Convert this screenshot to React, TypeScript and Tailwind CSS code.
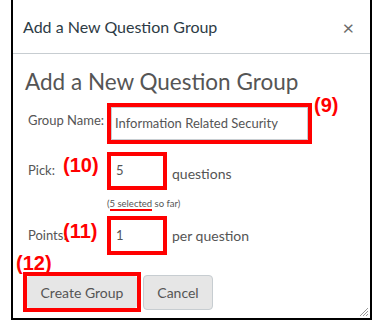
import React from "react";

const Tag = ({ text, className }: { text: string; className: string }) => (
  <span
    className={`absolute text-[20px] font-bold leading-none text-[#ff0000] ${className}`}
    style={{ fontFamily: '"Liberation Sans", Arial, sans-serif' }}
  >
    {text}
  </span>
);

const App = () => {
  return (
    <div className="w-[372px] h-[320px] bg-white" style={{ fontFamily: "Lato, sans-serif" }}>
      <div className="relative ml-[11px] w-[361px] h-[320px] border-l-2 border-r-2 border-b-2 border-black text-[#555]">
        {/* header */}
        <div className="h-[54px] flex items-center justify-between pl-[10px] pr-[16px] border-b border-[#c7cdd1]">
          <span className="text-[16px] text-[#2d3b45]">Add a New Question Group</span>
          <span className="text-[20px] leading-none text-[#6b6b6b]">×</span>
        </div>

        <div className="pl-[12px] pt-[14px]">
          <h2 className="text-[22.5px] leading-[28px] text-[#555]">Add a New Question Group</h2>

          {/* group name */}
          <div className="flex mt-[7px]">
            <span className="w-[82px] pl-[3px] pt-[8px] text-[13px]">Group Name:</span>
            <div className="w-[205px] h-[41px] border-4 border-[#ff0000]">
              <div className="h-full border border-[#c7cdd1] flex items-center pl-[3px] text-[13px]">
                Information Related Security
              </div>
            </div>
          </div>

          {/* pick */}
          <div className="flex items-center mt-[8px]">
            <span className="w-[82px] pl-[3px] self-start pt-[9px] text-[13px]">Pick:</span>
            <div className="w-[60px] h-[38px] border-4 border-[#ff0000] flex items-center pl-[5px] text-[13px]">
              5
            </div>
            <span className="ml-[5px] mt-[5px] text-[14px]">questions</span>
          </div>

          <div className="ml-[82px] mt-[8px] text-[9.5px] leading-[12px]">
            (<span className="border-b-2 border-[#ff0000]">5 selected</span> so far)
          </div>

          {/* points */}
          <div className="flex items-center mt-[6px]">
            <span className="w-[82px] pl-[3px] text-[13px]">Points:</span>
            <div className="w-[60px] h-[39px] border-4 border-[#ff0000] flex items-center pl-[5px] text-[13px]">
              1
            </div>
            <span className="ml-[5px] text-[14px]">per question</span>
          </div>

          {/* buttons */}
          <div className="flex items-center gap-[2px] mt-[17px] -ml-[2px]">
            <div className="border-4 border-[#ff0000] w-[118px] h-[40px]">
              <button className="w-full h-full bg-[#e6e6e6] text-[14px] text-[#555] rounded-[3px]">
                Create Group
              </button>
            </div>
            <button className="w-[70px] h-[35px] bg-[#e6e6e6] border border-[#c7cdd1] rounded-[4px] text-[14px] text-[#555]">
              Cancel
            </button>
          </div>
        </div>

        <Tag text="(9)" className="left-[301px] top-[95px]" />
        <Tag text="(10)" className="left-[50px] top-[155px]" />
        <Tag text="(11)" className="left-[50px] top-[221px]" />
        <Tag text="(12)" className="left-[3px] top-[253px]" />

        {/* resize grip */}
        <svg className="absolute right-[1px] bottom-[1px]" width="12" height="12" viewBox="0 0 12 12">
          <path d="M11 3 L3 11 M11 6 L6 11 M11 9 L9 11" stroke="#999" strokeWidth="1" />
        </svg>
      </div>
    </div>
  );
};

export default App;
